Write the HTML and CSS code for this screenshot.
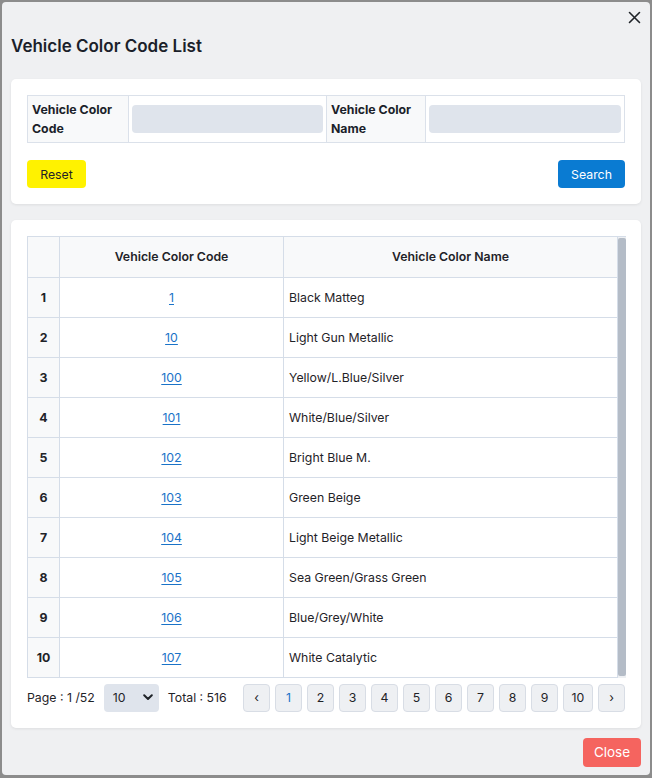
FILE: index.html
```html
<!DOCTYPE html>
<html lang="en">
<head>
<meta charset="utf-8">
<title>Vehicle Color Code List</title>
<link rel="stylesheet" href="styles.css">
</head>
<body>
<div class="modal">
  <div class="topbar">
    <button class="x-btn" aria-label="Close">
      <svg width="13" height="13" viewBox="0 0 13 13"><path d="M1.5 1.5 L11.5 11.5 M11.5 1.5 L1.5 11.5" stroke="#1f2328" stroke-width="1.6" stroke-linecap="round"/></svg>
    </button>
  </div>
  <h1 class="title">Vehicle Color Code List</h1>

  <div class="card search-card">
    <div class="filter">
      <div class="f-label">Vehicle Color Code</div>
      <div class="f-input"><div class="input"></div></div>
      <div class="f-label">Vehicle Color Name</div>
      <div class="f-input"><div class="input"></div></div>
    </div>
    <div class="actions">
      <button class="btn btn-reset">Reset</button>
      <button class="btn btn-search">Search</button>
    </div>
  </div>

  <div class="card list-card">
    <div class="scroll">
      <table class="grid">
        <thead>
          <tr><th class="c-no"></th><th class="c-code">Vehicle Color Code</th><th class="c-name">Vehicle Color Name</th></tr>
        </thead>
        <tbody>
          <tr><td class="c-no">1</td><td class="c-code"><a href="#">1</a></td><td class="c-name">Black Matteg</td></tr>
          <tr><td class="c-no">2</td><td class="c-code"><a href="#">10</a></td><td class="c-name">Light Gun Metallic</td></tr>
          <tr><td class="c-no">3</td><td class="c-code"><a href="#">100</a></td><td class="c-name">Yellow/L.Blue/Silver</td></tr>
          <tr><td class="c-no">4</td><td class="c-code"><a href="#">101</a></td><td class="c-name">White/Blue/Silver</td></tr>
          <tr><td class="c-no">5</td><td class="c-code"><a href="#">102</a></td><td class="c-name">Bright Blue M.</td></tr>
          <tr><td class="c-no">6</td><td class="c-code"><a href="#">103</a></td><td class="c-name">Green Beige</td></tr>
          <tr><td class="c-no">7</td><td class="c-code"><a href="#">104</a></td><td class="c-name">Light Beige Metallic</td></tr>
          <tr><td class="c-no">8</td><td class="c-code"><a href="#">105</a></td><td class="c-name">Sea Green/Grass Green</td></tr>
          <tr><td class="c-no">9</td><td class="c-code"><a href="#">106</a></td><td class="c-name">Blue/Grey/White</td></tr>
          <tr><td class="c-no">10</td><td class="c-code"><a href="#">107</a></td><td class="c-name">White Catalytic</td></tr>
        </tbody>
      </table>
      <div class="sbar"><div class="sthumb"></div></div>
    </div>
    <div class="pager-row">
      <div class="pager-info">
        <span>Page : 1 /52</span>
        <div class="select"><span>10</span>
          <svg width="10" height="7" viewBox="0 0 10 7"><path d="M1.2 1.3 L5 5 L8.8 1.3" fill="none" stroke="#1f2328" stroke-width="2" stroke-linecap="round" stroke-linejoin="round"/></svg>
        </div>
        <span>Total : 516</span>
      </div>
      <div class="pager">
        <button class="pg">&lsaquo;</button>
        <button class="pg active">1</button>
        <button class="pg">2</button>
        <button class="pg">3</button>
        <button class="pg">4</button>
        <button class="pg">5</button>
        <button class="pg">6</button>
        <button class="pg">7</button>
        <button class="pg">8</button>
        <button class="pg">9</button>
        <button class="pg wide">10</button>
        <button class="pg">&rsaquo;</button>
      </div>
    </div>
  </div>

  <div class="footer">
    <button class="btn btn-close">Close</button>
  </div>
</div>
</body>
</html>
```

FILE: styles.css
```css
* { box-sizing: border-box; }
html, body { margin: 0; padding: 0; }
body {
  background: #8c8c8c;
  font-family: Inter, "Noto Sans", "Liberation Sans", sans-serif;
  color: #1f2328;
  font-size: 12.3px;
  width: 652px;
  height: 778px;
  overflow: hidden;
}
.modal {
  margin: 2px 0 0 2px;
  width: 648px;
  height: 773px;
  background: #eff0f2;
  border-radius: 4px;
  padding: 0 9px;
}
.topbar {
  height: 30px;
  display: flex;
  justify-content: flex-end;
  align-items: center;
}
.x-btn {
  border: 0;
  background: transparent;
  padding: 0;
  width: 13px;
  height: 13px;
  display: flex;
  cursor: pointer;
}
.title {
  margin: 2px 0 21px 0;
  font-size: 17px;
  line-height: 24px;
  font-weight: 600;
  color: #1b1f2a;
}
.card {
  background: #fff;
  border-radius: 5px;
  box-shadow: 0 1px 3px rgba(0,0,0,0.08);
  padding: 16px;
}
.search-card { margin-bottom: 16px; }
.filter {
  display: grid;
  grid-template-columns: 101px 198px 99px 1fr;
  border: 1px solid #dbe1ea;
}
.f-label {
  background: #f8f9fa;
  font-weight: 700;
  font-size: 12.3px;
  line-height: 19px;
  padding: 4px 4px;
  border-right: 1px solid #dbe1ea;
  color: #1b1f2a;
}
.f-input {
  padding: 9px 3px;
  border-right: 1px solid #dbe1ea;
}
.f-input:last-child { border-right: 0; }
.input {
  height: 28px;
  background: #dfe4ec;
  border-radius: 4px;
}
.actions {
  display: flex;
  justify-content: space-between;
  margin-top: 17px;
}
.btn {
  font-family: inherit;
  font-size: 12.3px;
  height: 28px;
  border: 0;
  border-radius: 4px;
  padding: 0;
  cursor: pointer;
}
.btn-reset { background: #fff200; color: #1f2328; width: 59px; }
.btn-search { background: #0a7bd2; color: #fff; width: 67px; }
.scroll {
  display: flex;
  width: 599px;
  border-top: 1px solid #d5dde8;
}
.sbar {
  width: 8px;
  background: #eef0f3;
  padding: 1px 0 2px;
}
.sthumb {
  height: 100%;
  background: #b4bcc7;
  border-radius: 2px;
}
.grid {
  width: 591px;
  border-collapse: collapse;
  table-layout: fixed;
}
.grid th, .grid td {
  border: 1px solid #d5dde8;
  height: 40px;
  padding: 0 5px;
  font-size: 12.3px;
}
.grid thead th { border-top: 0; background: #f8f9fa; font-weight: 600; text-align: center; }
.grid .c-no { width: 32px; text-align: center; background: #f8f9fa; font-weight: 700; }
.grid .c-code { width: 224px; text-align: center; }
.grid td.c-name { text-align: left; }
.grid a { color: #1a73c8; text-decoration: underline; text-underline-offset: 2px; }
.pager-row {
  display: flex;
  justify-content: space-between;
  align-items: center;
  margin-top: 6px;
  width: 598px;
}
.pager-info {
  display: flex;
  align-items: center;
  gap: 9px;
}
.select {
  width: 55px;
  height: 28px;
  background: #dfe4ec;
  border-radius: 4px;
  display: flex;
  align-items: center;
  justify-content: space-between;
  padding: 0 6px 0 9px;
  font-size: 12.3px;
}
.pager { display: flex; gap: 5px; }
.pg {
  width: 27px;
  height: 28px;
  background: #eef0f3;
  border: 1px solid #d8dde5;
  border-radius: 4px;
  font-family: inherit;
  font-size: 12.3px;
  color: #1f2328;
  padding: 0;
  cursor: pointer;
}
.pg.wide { width: 30px; }
.pg.active { color: #1a73c8; }
.footer {
  display: flex;
  justify-content: flex-end;
  margin-top: 10px;
}
.btn-close {
  background: #f5645f;
  color: #fff;
  font-size: 13.5px;
  width: 58px;
  height: 29px;
}
```
